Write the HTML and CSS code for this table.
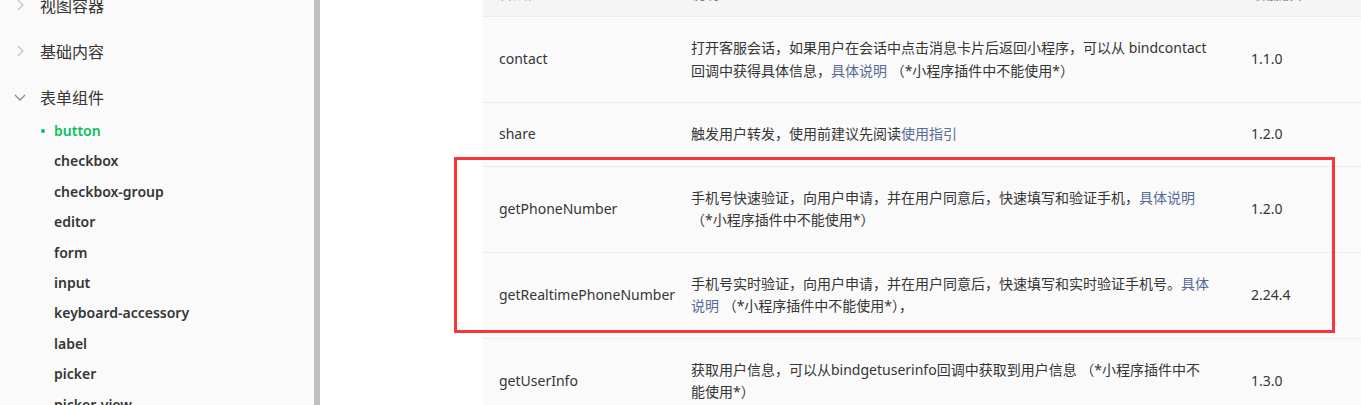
FILE: index.html
```html
<!DOCTYPE html>
<html lang="zh-CN">
<head>
    <meta charset="utf-8">
    <title>button - 表单组件</title>
    <link rel="stylesheet" href="styles.css">
</head>
<body>

    <div class="layout">
        <aside class="sidebar">
            <ul class="nav">
                <li class="group">
                    <div class="group-title">
                        <svg class="chev" viewBox="0 0 12 12"><path d="M4 1 L9 6 L4 11"/></svg>
                        视图容器
                    </div>
                </li>
                <li class="group">
                    <div class="group-title">
                        <svg class="chev" viewBox="0 0 12 12"><path d="M4 1 L9 6 L4 11"/></svg>
                        基础内容
                    </div>
                </li>
                <li class="group open">
                    <div class="group-title">
                        <svg class="chev down" viewBox="0 0 12 12"><path d="M1 4 L6 9 L11 4"/></svg>
                        表单组件
                    </div>
                    <ul class="sub">
                        <li class="active">button</li>
                        <li>checkbox</li>
                        <li>checkbox-group</li>
                        <li>editor</li>
                        <li>form</li>
                        <li>input</li>
                        <li>keyboard-accessory</li>
                        <li>label</li>
                        <li>picker</li>
                        <li>picker-view</li>
                    </ul>
                </li>
            </ul>
        </aside>
        <div class="scrollbar"></div>

        <main class="content">
            <table class="doc-table">
                <thead>
                    <tr>
                        <th class="col-value">合法值</th>
                        <th class="col-desc">说明</th>
                        <th class="col-ver">最低版本</th>
                    </tr>
                </thead>
                <tbody>
                    <tr>
                        <td>contact</td>
                        <td class="desc">打开客服会话，如果用户在会话中点击消息卡片后返回小程序，可以从 bindcontact<br>回调中获得具体信息，<a href="#">具体说明</a> （*小程序插件中不能使用*）</td>
                        <td class="ver">1.1.0</td>
                    </tr>
                    <tr>
                        <td>share</td>
                        <td class="desc">触发用户转发，使用前建议先阅读<a href="#">使用指引</a></td>
                        <td class="ver">1.2.0</td>
                    </tr>
                    <tr>
                        <td>getPhoneNumber</td>
                        <td class="desc">手机号快速验证，向用户申请，并在用户同意后，快速填写和验证手机，<a href="#">具体说明</a><br>（*小程序插件中不能使用*）</td>
                        <td class="ver">1.2.0</td>
                    </tr>
                    <tr>
                        <td>getRealtimePhoneNumber</td>
                        <td class="desc">手机号实时验证，向用户申请，并在用户同意后，快速填写和实时验证手机号。<a href="#">具体<br>说明</a> （*小程序插件中不能使用*），</td>
                        <td class="ver">2.24.4</td>
                    </tr>
                    <tr>
                        <td>getUserInfo</td>
                        <td class="desc">获取用户信息，可以从bindgetuserinfo回调中获取到用户信息 （*小程序插件中不<br>能使用*）</td>
                        <td class="ver">1.3.0</td>
                    </tr>
                </tbody>
            </table>

            <!-- annotation box drawn over the table -->
            <div class="highlight"></div>
        </main>
    </div>

</body>
</html>
```

FILE: styles.css
```css
* {
    margin: 0;
    padding: 0;
    box-sizing: border-box;
}

body {
    font-family: 'Noto Sans', 'Noto Sans CJK SC', sans-serif;
    background-color: #ffffff;
    color: #353535;
    overflow: hidden;
    height: 405px;
}

.layout {
    display: flex;
    height: 405px;
}

/* sidebar */
.sidebar {
    width: 314px;
    flex-shrink: 0;
    background-color: #fafafa;
    overflow: hidden;
}

.nav {
    list-style: none;
    margin-top: -18px;
}

.group-title {
    display: flex;
    align-items: center;
    height: 46px;
    padding-left: 14px;
    font-size: 16px;
    color: #353535;
}

.chev {
    width: 12px;
    height: 12px;
    margin-right: 14px;
    fill: none;
    stroke: #c4c4c4;
    stroke-width: 1.3;
}

.chev.down {
    stroke: #8c8c8c;
}

.sub {
    list-style: none;
    margin-top: -4px;
}

.sub li {
    position: relative;
    height: 30.4px;
    line-height: 30.4px;
    padding-left: 54px;
    font-size: 14px;
    font-weight: 600;
    color: #353535;
}

.sub li.active {
    color: #07c160;
}

.sub li.active::before {
    content: "";
    position: absolute;
    left: 41px;
    top: 13px;
    width: 4px;
    height: 4px;
    border-radius: 50%;
    background-color: #07c160;
}

.scrollbar {
    width: 6px;
    flex-shrink: 0;
    background-color: #c1c1c1;
}

/* main content */
.content {
    position: relative;
    flex: 1;
    padding-left: 163px;
    overflow: hidden;
}

.doc-table {
    width: 100%;
    margin-top: -28px;
    border-collapse: collapse;
    table-layout: fixed;
    font-size: 14px;
}

.doc-table th,
.doc-table td {
    text-align: left;
    vertical-align: middle;
    border-bottom: 1px solid #ececec;
    padding: 20px 16px;
    line-height: 22.5px;
}

.doc-table th {
    padding: 11px 16px;
    line-height: 22px;
    font-weight: normal;
    color: #7a7a7a;
    background-color: #f5f5f5;
}

.doc-table td {
    background-color: #fafafa;
    color: #353535;
}

.col-value {
    width: 192px;
}

.col-desc {
    width: 560px;
}

.desc {
    white-space: nowrap;
}

.desc a {
    color: #576b95;
    text-decoration: none;
}

.ver {
    color: #6477a0;
}

.highlight {
    position: absolute;
    left: 134px;
    top: 157px;
    width: 881px;
    height: 176px;
    border: 3px solid #f7363c;
    pointer-events: none;
}
```
